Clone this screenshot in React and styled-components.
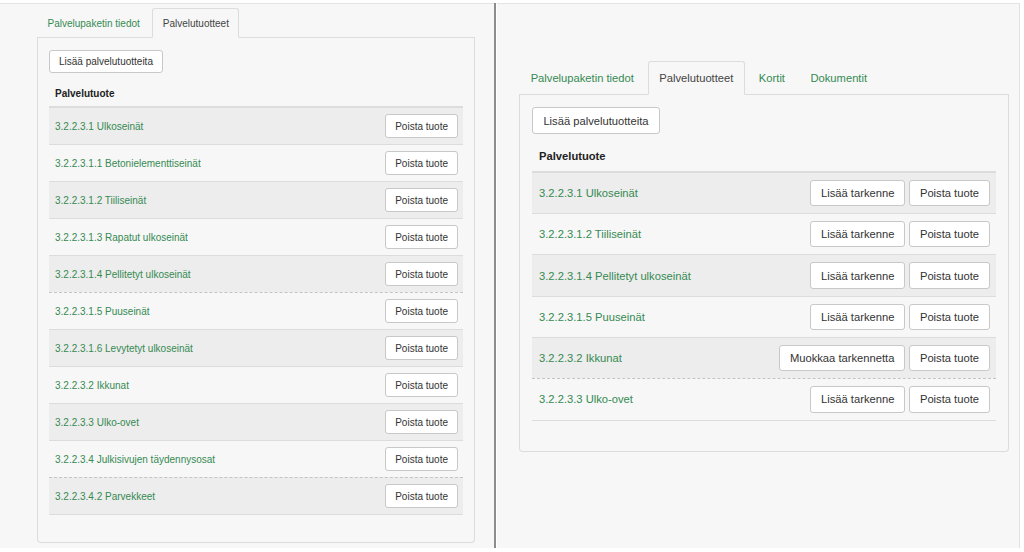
import React from 'react'
import styled, { createGlobalStyle } from 'styled-components'

const GlobalStyle = createGlobalStyle`
  html, body {
    margin: 0;
    background: #ffffff;
  }
  body {
    font-family: "Liberation Sans", Arial, sans-serif;
    color: #333;
  }
`

const Screen = styled.div`
  display: flex;
  margin-top: 3px;
  height: 545px;
  width: 1020px;
`

const Panel = styled.section`
  box-sizing: border-box;
  width: ${({ $w }) => $w}px;
  height: 100%;
  padding: ${({ $pt }) => $pt}px 0 0 ${({ $pl }) => $pl}px;
  background: #f7f7f7;
  border-top: 1px solid #e4e4e4;
  border-right: ${({ $edge }) => ($edge ? '1px solid #e2e2e2' : 'none')};
  font-size: ${({ $fs }) => $fs}px;
`

const Divider = styled.div`
  width: 2px;
  height: 100%;
  background: #8c8c8c;
  margin-right: 1px;
`

const Tabs = styled.div`
  display: flex;
  align-items: flex-end;
  width: ${({ $w }) => $w}px;
  border-bottom: 1px solid #dcdcdc;
`

const Tab = styled.div`
  height: 3em;
  box-sizing: border-box;
  display: flex;
  align-items: center;
  padding: 0 0.95em;
  margin-right: 0.2em;
  margin-bottom: -1px;
  border: 1px solid ${({ $active }) => ($active ? '#dcdcdc' : 'transparent')};
  border-bottom-color: ${({ $active }) => ($active ? '#f7f7f7' : 'transparent')};
  border-radius: 3px 3px 0 0;
  background: ${({ $active }) => ($active ? '#f7f7f7' : 'transparent')};
  color: ${({ $active }) => ($active ? '#444' : '#358a52')};
  white-space: nowrap;
`

const Card = styled.div`
  box-sizing: border-box;
  width: ${({ $w }) => $w}px;
  padding: 1.15em 1.1em 2.7em 1.1em;
  border: 1px solid #dcdcdc;
  border-top: none;
  border-radius: 0 0 4px 4px;
  background: #f7f7f7;
`

const Button = styled.button`
  font: inherit;
  color: #333;
  height: 2.35em;
  padding: 0 0.9em;
  background: #fff;
  border: 1px solid #c8c8c8;
  border-radius: 3px;
  white-space: nowrap;
`

const Table = styled.div`
  margin-top: 0.7em;
  border-bottom: 1px solid #dcdcdc;
`

const Head = styled.div`
  height: 2.6em;
  display: flex;
  align-items: center;
  padding-left: 0.6em;
  font-weight: bold;
  color: #222;
  border-bottom: 2px solid #dcdcdc;
`

const Row = styled.div`
  height: 3.6em;
  display: flex;
  align-items: center;
  justify-content: space-between;
  padding: 0 0.5em 0 0.6em;
  border-top: 1px ${({ $dashed }) => ($dashed ? 'dashed #c4c4c4' : 'solid #dcdcdc')};
  background: ${({ $odd }) => ($odd ? '#ededed' : 'transparent')};
  &:first-child {
    border-top: none;
  }
`

const Name = styled.span`
  color: #358a52;
`

const Actions = styled.div`
  display: flex;
  gap: 0.3em;
`

const leftRows = [
  { name: '3.2.2.3.1 Ulkoseinät' },
  { name: '3.2.2.3.1.1 Betonielementtiseinät' },
  { name: '3.2.2.3.1.2 Tiiliseinät' },
  { name: '3.2.2.3.1.3 Rapatut ulkoseinät' },
  { name: '3.2.2.3.1.4 Pellitetyt ulkoseinät' },
  { name: '3.2.2.3.1.5 Puuseinät', dashed: true },
  { name: '3.2.2.3.1.6 Levytetyt ulkoseinät' },
  { name: '3.2.2.3.2 Ikkunat' },
  { name: '3.2.2.3.3 Ulko-ovet' },
  { name: '3.2.2.3.4 Julkisivujen täydennysosat' },
  { name: '3.2.2.3.4.2 Parvekkeet', dashed: true },
]

const rightRows = [
  { name: '3.2.2.3.1 Ulkoseinät', action: 'Lisää tarkenne' },
  { name: '3.2.2.3.1.2 Tiiliseinät', action: 'Lisää tarkenne' },
  { name: '3.2.2.3.1.4 Pellitetyt ulkoseinät', action: 'Lisää tarkenne' },
  { name: '3.2.2.3.1.5 Puuseinät', action: 'Lisää tarkenne' },
  { name: '3.2.2.3.2 Ikkunat', action: 'Muokkaa tarkennetta' },
  { name: '3.2.2.3.3 Ulko-ovet', action: 'Lisää tarkenne', dashed: true },
]

const ProductTab = ({ tabs, width, rows }) => (
  <>
    <Tabs $w={width}>
      {tabs.map((t) => (
        <Tab key={t} $active={t === 'Palvelutuotteet'}>{t}</Tab>
      ))}
    </Tabs>
    <Card $w={width}>
      <Button>Lisää palvelutuotteita</Button>
      <Table>
        <Head>Palvelutuote</Head>
        <div>
          {rows.map((r, i) => (
            <Row key={r.name} $odd={i % 2 === 0} $dashed={r.dashed}>
              <Name>{r.name}</Name>
              <Actions>
                {r.action && <Button>{r.action}</Button>}
                <Button>Poista tuote</Button>
              </Actions>
            </Row>
          ))}
        </div>
      </Table>
    </Card>
  </>
)

export default function App() {
  return (
    <>
      <GlobalStyle />
      <Screen>
        <Panel $w={494} $pt={4} $pl={37} $fs={10}>
          <ProductTab
            tabs={['Palvelupaketin tiedot', 'Palvelutuotteet']}
            width={438}
            rows={leftRows}
          />
        </Panel>
        <Divider />
        <Panel $w={523} $pt={57} $pl={22} $fs={11.2} $edge>
          <ProductTab
            tabs={['Palvelupaketin tiedot', 'Palvelutuotteet', 'Kortit', 'Dokumentit']}
            width={490}
            rows={rightRows}
          />
        </Panel>
      </Screen>
    </>
  )
}
